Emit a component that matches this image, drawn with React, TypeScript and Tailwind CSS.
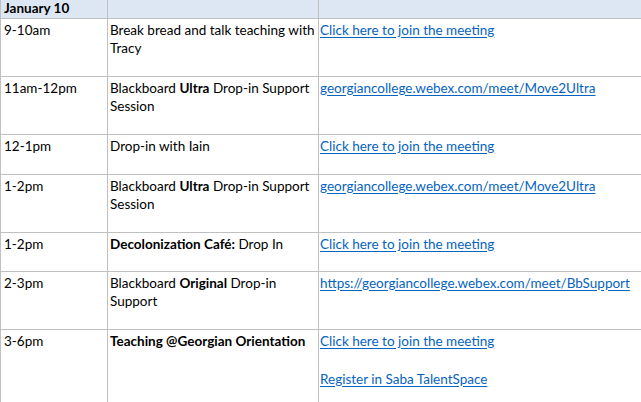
const rows: { time: string; title: React.ReactNode; links: string[]; h: string }[] = [
  { time: "9-10am", title: "Break bread and talk teaching with Tracy", links: ["Click here to join the meeting"], h: "h-[58px]" },
  {
    time: "11am-12pm",
    title: (
      <>
        Blackboard <b>Ultra</b> Drop-in Support Session
      </>
    ),
    links: ["georgiancollege.webex.com/meet/Move2Ultra"],
    h: "h-[58px]",
  },
  { time: "12-1pm", title: "Drop-in with Iain", links: ["Click here to join the meeting"], h: "h-[40px]" },
  {
    time: "1-2pm",
    title: (
      <>
        Blackboard <b>Ultra</b> Drop-in Support Session
      </>
    ),
    links: ["georgiancollege.webex.com/meet/Move2Ultra"],
    h: "h-[58px]",
  },
  {
    time: "1-2pm",
    title: (
      <>
        <b>Decolonization Café:</b> Drop In
      </>
    ),
    links: ["Click here to join the meeting"],
    h: "h-[39px]",
  },
  {
    time: "2-3pm",
    title: (
      <>
        Blackboard <b>Original</b> Drop-in Support
      </>
    ),
    links: ["https://georgiancollege.webex.com/meet/BbSupport"],
    h: "h-[58px]",
  },
  {
    time: "3-6pm",
    title: <b>Teaching @Georgian Orientation</b>,
    links: ["Click here to join the meeting", "Register in Saba TalentSpace"],
    h: "h-[100px]",
  },
];

export default function App() {
  return (
    <div className="w-[641px] h-[402px] overflow-hidden bg-white font-['Lato','Open_Sans',sans-serif] text-[13.5px] leading-[18px] text-black">
      <table className="w-[760px] table-fixed border-collapse">
        <colgroup>
          <col className="w-[107px]" />
          <col className="w-[211px]" />
          <col />
        </colgroup>
        <tbody>
          <tr className="h-[18px] bg-[#dde7f3]">
            <td className="border border-[#c0c0c0] border-t-0 pl-[3px] align-top font-bold leading-[17px]">January 10</td>
            <td className="border border-[#c0c0c0] border-t-0" />
            <td className="border border-[#c0c0c0] border-t-0" />
          </tr>
          {rows.map((r, i) => (
            <tr key={i} className={r.h}>
              <td className="border border-[#c0c0c0] pl-[3px] pt-[2px] align-top">{r.time}</td>
              <td className="border border-[#c0c0c0] pl-[2px] pt-[2px] align-top">{r.title}</td>
              <td className="border border-[#c0c0c0] pl-[1px] pt-[2px] align-top">
                <div className="flex flex-col gap-[20px]">
                  {r.links.map((l) => (
                    <a key={l} href="#" className="text-[#0563c1] underline underline-offset-[2px] whitespace-nowrap">
                      {l}
                    </a>
                  ))}
                </div>
              </td>
            </tr>
          ))}
        </tbody>
      </table>
    </div>
  );
}
